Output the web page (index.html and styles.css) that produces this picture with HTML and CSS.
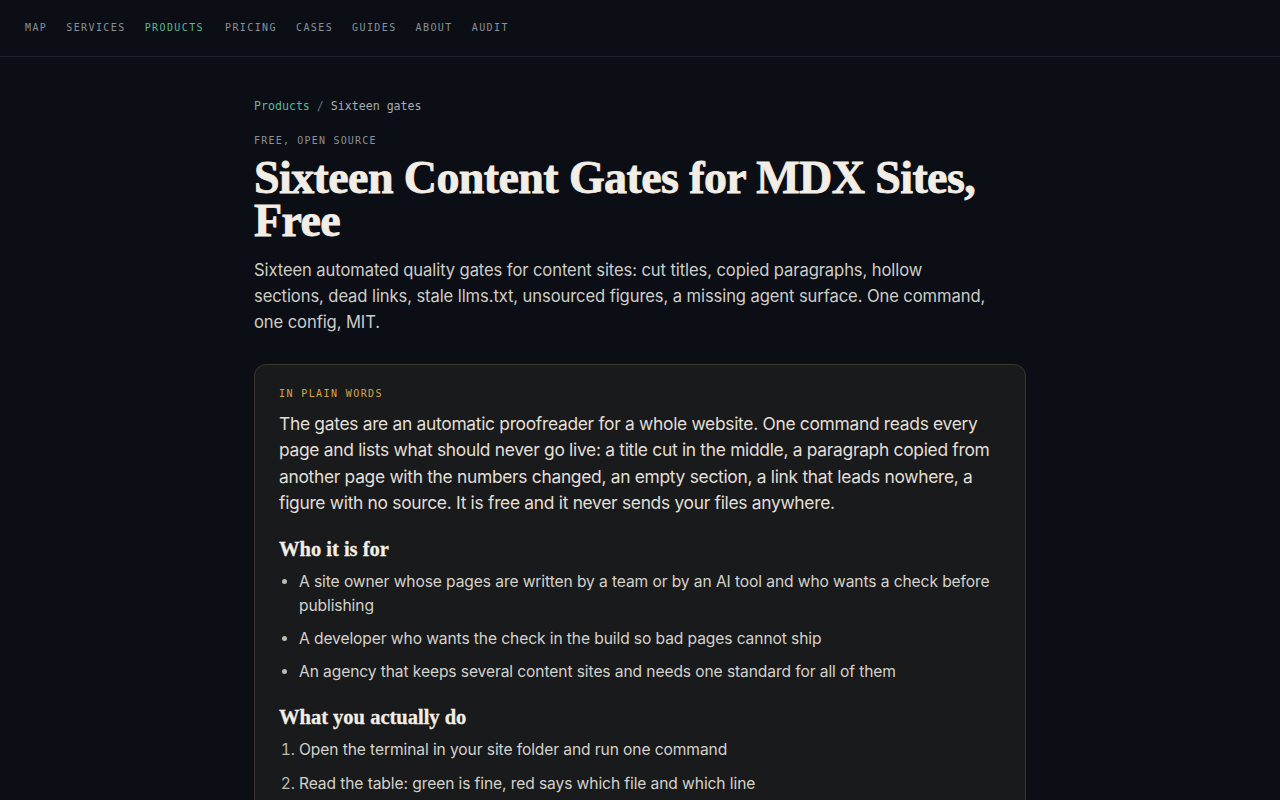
FILE: index.html
```html
<!DOCTYPE html>
<html lang="en">
<head>
<meta charset="utf-8">
<title>Sixteen Content Gates for MDX Sites, Free</title>
<link rel="stylesheet" href="styles.css">
</head>
<body>
<header class="topbar">
  <nav class="nav">
    <a href="#">Map</a>
    <a href="#">Services</a>
    <a href="#" class="active">Products</a>
    <a href="#">Pricing</a>
    <a href="#">Cases</a>
    <a href="#">Guides</a>
    <a href="#">About</a>
    <a href="#">Audit</a>
  </nav>
</header>
<main class="page">
  <div class="crumbs"><a href="#">Products</a> <span class="sep">/</span> <span>Sixteen gates</span></div>
  <div class="eyebrow">Free, open source</div>
  <h1 class="title">Sixteen Content Gates for MDX Sites, Free</h1>
  <p class="lead">Sixteen automated quality gates for content sites: cut titles, copied paragraphs, hollow sections, dead links, stale llms.txt, unsourced figures, a missing agent surface. One command, one config, MIT.</p>
  <section class="card">
    <div class="card-label">In plain words</div>
    <p class="card-intro">The gates are an automatic proofreader for a whole website. One command reads every page and lists what should never go live: a title cut in the middle, a paragraph copied from another page with the numbers changed, an empty section, a link that leads nowhere, a figure with no source. It is free and it never sends your files anywhere.</p>
    <h3 class="card-h">Who it is for</h3>
    <ul class="card-list">
      <li>A site owner whose pages are written by a team or by an AI tool and who wants a check before publishing</li>
      <li>A developer who wants the check in the build so bad pages cannot ship</li>
      <li>An agency that keeps several content sites and needs one standard for all of them</li>
    </ul>
    <h3 class="card-h">What you actually do</h3>
    <ol class="card-list">
      <li>Open the terminal in your site folder and run one command</li>
      <li>Read the table: green is fine, red says which file and which line</li>
      <li>Fix what is red, run it again, and publish when everything is green</li>
    </ol>
  </section>
</main>
</body>
</html>
```
FILE: styles.css
```css
* { box-sizing: border-box; }
html, body { margin: 0; padding: 0; }
body {
  background: #0b0f15;
  color: #d4d2cc;
  font-family: "Inter", "Noto Sans", sans-serif;
}
a { text-decoration: none; color: inherit; }

.topbar {
  height: 57px;
  border-bottom: 1px solid #1c2129;
  display: flex;
  align-items: center;
  padding: 0 25px 2px;
}
.nav {
  display: flex;
  gap: 19px;
  font-family: "DejaVu Sans Mono", monospace;
  font-size: 10px;
  letter-spacing: 1.4px;
  text-transform: uppercase;
}
.nav a { color: #8b9099; }
.nav a.active { color: #5cb898; padding-right: 2px; }

.page {
  width: 772px;
  margin: 0 auto;
  padding-top: 40px;
}
.crumbs {
  font-family: "DejaVu Sans Mono", monospace;
  font-size: 11.6px;
  color: #a9adb3;
  line-height: 18px;
}
.crumbs a { color: #5cb898; }
.crumbs .sep { color: #6c7178; }

.eyebrow {
  margin-top: 19px;
  font-family: "DejaVu Sans Mono", monospace;
  font-size: 10px;
  letter-spacing: 1.2px;
  text-transform: uppercase;
  color: #8b9099;
  line-height: 14px;
}
.title {
  margin: 8px 0 0;
  font-family: "Liberation Serif", serif;
  font-weight: 700;
  font-size: 46px;
  line-height: 43px;
  color: #f3eee5;
  letter-spacing: -0.6px;
  -webkit-text-stroke: 0.8px #f3eee5;
}
.lead {
  margin: 15px 0 0;
  font-size: 16.6px;
  letter-spacing: -0.1px;
  line-height: 26px;
  color: #cfcdc8;
  max-width: 742px;
}

.card {
  margin-top: 29px;
  background: #191a1b;
  border: 1px solid #3b362b;
  border-radius: 12px;
  padding: 22px 24px 24px;
}
.card-label {
  font-family: "DejaVu Sans Mono", monospace;
  font-size: 10px;
  letter-spacing: 1.4px;
  text-transform: uppercase;
  color: #d8a648;
  line-height: 14px;
}
.card-intro {
  margin: 10px 0 0;
  font-size: 17.4px;
  letter-spacing: -0.3px;
  line-height: 26.3px;
  color: #e2dfd8;
}
.card-h {
  margin: 20px 0 0;
  font-family: "Liberation Serif", serif;
  font-weight: 700;
  font-size: 20.5px;
  line-height: 26px;
  color: #f3eee5;
  -webkit-text-stroke: 0.3px #f3eee5;
}
.card-list {
  margin: 8px 0 0;
  padding-left: 20px;
  font-size: 15.6px;
  letter-spacing: -0.1px;
  line-height: 24px;
  color: #d4d2cc;
}
.card-list li { margin-bottom: 9px; }
ol.card-list li { margin-bottom: 10px; }
.card-list li::marker { color: #bdbab3; }
```
